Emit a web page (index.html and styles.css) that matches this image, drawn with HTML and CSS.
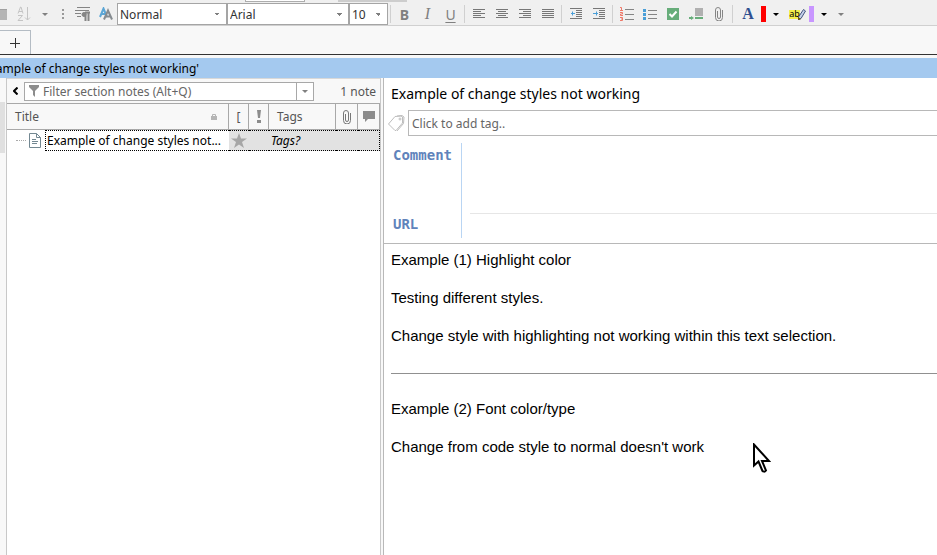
FILE: index.html
```
<!DOCTYPE html>
<html lang="en">
<head>
  <meta charset="UTF-8">
  <title>Notebook</title>
  <link rel="stylesheet" href="styles.css">
</head>
<body>

  <!-- Formatting toolbar -->
  <div class="toolbar">
    <span class="stub stub-box"></span>
    <span class="stub stub-bar"></span>
    <span class="cut-icon"></span>
    <button class="tool sort" aria-label="Sort">
      <svg width="14" height="16" viewBox="0 0 14 16" fill="none" stroke="#c4c4c4">
        <path d="M1 7.500L3.500 1h.5L6 7.500M2 5.500h3.500M1 9.500h4.500L1 14.500h5M10.500 1v13M8 11.500l2.500 2.500 2.500-2.500"/>
      </svg>
    </button>
    <button class="tool more" aria-label="More sorting"><i class="arrow"></i></button>
    <span class="dots"><i></i><i></i><i></i></span>
    <button class="tool" aria-label="Paragraph">
      <svg width="16" height="16" viewBox="0 0 16 16" stroke="#858585">
        <path d="M2 1.500h13M0 4.500h14M0 7.500h6M2 10.500h4" fill="none"/>
        <path d="M10.500 15V6.500M13.500 15V6.500M15 6.500h-5" stroke-width="2" fill="none"/>
        <circle cx="9" cy="8.500" r="2" fill="#858585"/>
      </svg>
    </button>
    <button class="tool" aria-label="Styles">
      <svg width="14" height="14" viewBox="0 0 14 14" fill="none" stroke-width="2">
        <path d="M1 10L4.500 1.500 8 10M2.500 7h4" stroke="#5ba6d6"/>
        <path d="M5 12.500L9 3.500l4 9M6.500 9.500h5" stroke="#858b90"/>
      </svg>
    </button>
    <select class="combo style" aria-label="Style"><option>Normal</option></select>
    <select class="combo font" aria-label="Font"><option>Arial</option></select>
    <select class="combo size" aria-label="Size"><option>10</option></select>
    <span class="sep"></span>
    <button class="tool letter bold">B</button>
    <button class="tool letter italic">I</button>
    <button class="tool letter under">U</button>
    <span class="sep"></span>
    <button class="tool" aria-label="Align left">
      <svg width="12" height="10" viewBox="0 0 12 10" stroke="#777"><path d="M0 .5h12M0 2.500h8M0 4.500h12M0 6.500h8M0 8.500h12"/></svg>
    </button>
    <button class="tool" aria-label="Align centre">
      <svg width="12" height="10" viewBox="0 0 12 10" stroke="#777"><path d="M0 .5h12M2 2.500h8M0 4.500h12M2 6.500h8M0 8.500h12"/></svg>
    </button>
    <button class="tool" aria-label="Align right">
      <svg width="12" height="10" viewBox="0 0 12 10" stroke="#777"><path d="M0 .5h12M4 2.500h8M0 4.500h12M4 6.500h8M0 8.500h12"/></svg>
    </button>
    <button class="tool" aria-label="Justify">
      <svg width="12" height="10" viewBox="0 0 12 10" stroke="#777"><path d="M0 .5h12M0 2.500h12M0 4.500h12M0 6.500h12M0 8.500h12"/></svg>
    </button>
    <span class="sep"></span>
    <button class="tool" aria-label="Outdent">
      <svg width="12" height="12" viewBox="0 0 12 12" stroke="#777"><path d="M0 .5h12M6 2.500h6M6 4.500h6M6 6.500h6M6 8.500h6M0 10.500h12"/><path d="M1 5.500h4M2.500 3.500v4" stroke="#4a9fd8"/></svg>
    </button>
    <button class="tool" aria-label="Indent">
      <svg width="12" height="12" viewBox="0 0 12 12" stroke="#777"><path d="M0 .5h12M6 2.500h6M6 4.500h6M6 6.500h6M6 8.500h6M0 10.500h12"/><path d="M0 5.500h5M3.500 3.500v4" stroke="#4a9fd8"/></svg>
    </button>
    <span class="sep"></span>
    <button class="tool" aria-label="Numbered list">
      <svg width="14" height="14" viewBox="0 0 14 14" fill="none"><path d="M5 2.500h9M5 7.500h9M5 12.500h9" stroke="#858585"/><path d="M0 .5h1.500v3M0 3.500h3M0 5.500h2.500v1.500H.5v1.500h2.500M0 10.500h2.500v3H0M1 12h1.500" stroke="#ee7868"/></svg>
    </button>
    <button class="tool" aria-label="Bullet list">
      <svg width="14" height="12" viewBox="0 0 14 12"><path d="M5 2.500h9M5 6.500h9M5 10.500h9" stroke="#858585"/><path d="M0 1h3v3H0zM0 5h3v3H0zM0 9h3v3H0z" fill="#4a9fd8"/></svg>
    </button>
    <button class="tool" aria-label="Checkbox">
      <svg width="12" height="12" viewBox="0 0 12 12"><path d="M0 0h12v12H0z" fill="#67ad7a"/><path d="M2.500 6L5 8.500l4.500-5" stroke="#fff" stroke-width="2" fill="none"/></svg>
    </button>
    <button class="tool" aria-label="Insert">
      <svg width="14" height="12" viewBox="0 0 14 12"><path d="M6 0h8v8H6z" fill="#b0b0b0"/><path d="M6 9h8v2H6zM0 9h2V8l3 2-3 2v-1H0z" fill="#67ad7a"/></svg>
    </button>
    <button class="tool" aria-label="Attach">
      <svg width="8" height="14" viewBox="0 0 8 14" fill="none" stroke="#858585"><path d="M2.500 4v6a1.500 1.500 0 0 0 3 0V3a2 2 0 0 0-5 0v7.500a3 3 0 0 0 7 0V3"/></svg>
    </button>
    <span class="sep"></span>
    <button class="tool fore" aria-label="Font color">A</button>
    <span class="swatch red"></span>
    <button class="tool drop" aria-label="Pick font color"><i class="arrow black"></i></button>
    <button class="tool" aria-label="Highlight">
      <span class="ab">ab</span>
      <svg class="pen" width="8" height="11" viewBox="0 0 8 11"><path d="M.5 10.500V8L5.500.5l2 1.500L3 9.500z" fill="#c3cfe8" stroke="#43557f"/><path d="M0 8l3 2-2 1H0z" fill="#6b5a10"/></svg>
    </button>
    <span class="swatch purple"></span>
    <button class="tool drop" aria-label="Pick highlight color"><i class="arrow black"></i></button>
    <button class="tool overflow" aria-label="More tools"><i class="arrow"></i></button>
  </div>

  <div class="tabs">
    <button class="new-tab" aria-label="New tab"><svg width="10" height="10" viewBox="0 0 10 10" stroke="#333"><path d="M0 5.500h10M5.500 0v10"/></svg></button>
  </div>

  <div class="caption"><span>Example of change styles not working'</span></div>

  <div class="main">
    <div class="gutter"></div>

    <!-- Notes list -->
    <div class="list">
      <div class="filter">
        <button class="back" aria-label="Collapse"><svg width="5" height="8" viewBox="0 0 5 8" fill="none" stroke="#000" stroke-width="2"><path d="M4.500.5L1 4l3.500 3.500"/></svg></button>
        <div class="filter-box">
          <svg width="10" height="12" viewBox="0 0 10 12"><path d="M0 0h10v2L6 6v6L4 10V6L0 2z" fill="#8c8c8c"/></svg>
          <input type="text" placeholder="Filter section notes (Alt+Q)" aria-label="Filter section notes">
          <button aria-label="Filter history"><i class="arrow"></i></button>
        </div>
        <span class="count">1 note</span>
      </div>

      <table class="notes">
        <colgroup>
          <col class="c-title"><col class="c-small"><col class="c-small"><col><col class="c-icon"><col class="c-icon">
        </colgroup>
        <thead>
          <tr>
            <th><div class="title-head">Title
              <svg width="6" height="7" viewBox="0 0 6 7"><path d="M0 3h6v4H0z" fill="#b5b5b5"/><path d="M1.500 3V1.500h3V3" fill="none" stroke="#b5b5b5"/></svg></div></th>
            <th class="mid bracket">[</th>
            <th class="mid"><svg width="4" height="13" viewBox="0 0 4 13" fill="#8c8c8c"><path d="M0 0h4L3 8H1zM0 10h4v3H0z"/></svg></th>
            <th class="tags-head">Tags</th>
            <th class="mid"><svg width="8" height="14" viewBox="0 0 8 14" fill="none" stroke="#777"><path d="M2.500 4v6a1.500 1.500 0 0 0 3 0V3a2 2 0 0 0-5 0v7.500a3 3 0 0 0 7 0V3"/></svg></th>
            <th class="mid"><svg width="12" height="11" viewBox="0 0 12 11"><path d="M0 0h12v8H5l-3 3V8H0z" fill="#8c8c8c"/></svg></th>
          </tr>
        </thead>
        <tbody>
          <tr>
            <td>
              <div class="note">
                <span class="branch"></span>
                <svg width="12" height="15" viewBox="0 0 12 15" fill="none" stroke="#738892"><path d="M.5.5h7l4 4v10H.5zM7.500.5v4h4M3 6.500h4M3 8.500h6M3 10.500h5"/></svg>
                <span class="note-title">Example of change styles not...</span>
              </div>
            </td>
            <td class="sel mid"><svg width="16" height="15" viewBox="0 0 16 15"><path d="M8 0l2 5.500h6l-5 3.500 2 6-5-3.500L3 15l2-6-5-3.500h6z" fill="#a6a6a6"/></svg></td>
            <td class="sel"></td>
            <td class="sel tags">Tags?</td>
            <td class="sel"></td>
            <td class="sel last"></td>
          </tr>
        </tbody>
      </table>
    </div>

    <!-- Open note -->
    <div class="editor">
      <h1>Example of change styles not working</h1>
      <div class="tag-row">
        <svg width="17" height="17" viewBox="0 0 17 17" fill="none" stroke="#bdbdbd"><path d="M.5 9L7 1.500l6-.5 1.500 1v6L8 15.500H7zM9 1l5-.5 2 1.500-.5 6.500L9 16"/><circle cx="12" cy="4" r="1"/></svg>
        <input type="text" placeholder="Click to add tag.." aria-label="Tags">
      </div>
      <div class="fields">
        <div class="labels">
          <label for="comment">Comment</label>
          <label for="url">URL</label>
        </div>
        <div class="values">
          <textarea id="comment"></textarea>
          <input type="text" id="url">
        </div>
      </div>
      <div class="content">
        <p>Example (1) Highlight color</p>
        <p>Testing different styles.</p>
        <p>Change style with highlighting not working within this text selection.</p>
        <hr>
        <p>Example (2) Font color/type</p>
        <p>Change from code style to normal doesn't work</p>
      </div>
      <svg class="pointer" width="18" height="30" viewBox="0 0 18 30"><path d="M1 1.500v21l4.500-4 4 9.500q2 1.500 3.500-.5l-4-9.500h7z" fill="#fff" stroke="#000" stroke-width="2"/></svg>
    </div>
  </div>

</body>
</html>
```
FILE: styles.css
```
* {
  box-sizing: border-box;
}

body {
  margin: 0;
  min-height: 100vh;
  display: flex;
  flex-direction: column;
  font-family: "Noto Sans", Tahoma, sans-serif;
  font-size: 12px;
  color: #000;
  background: #f8f8f8;
  overflow: hidden;
}

button, input, select, textarea {
  font: inherit;
  color: inherit;
  margin: 0;
  padding: 0;
  border: none;
  background: none;
  outline: none;
}

svg {
  display: block;
  flex: none;
}

/* toolbar */
.toolbar {
  position: relative;
  display: flex;
  align-items: center;
  height: 26px;
  padding-top: 3px;
  background: #f0f0f0;
  border-bottom: 1px solid #d0d0d0;
}

.toolbar > * {
  flex: none;
}

.stub {
  position: absolute;
  top: 0;
  height: 2px;
}

.stub-box {
  left: 245px;
  width: 60px;
  background: #fff;
  border: 1px solid #adadad;
  border-top: none;
}

.stub-bar {
  left: 338px;
  width: 69px;
  background: #cdcdcd;
}

.cut-icon {
  width: 7px;
  height: 11px;
  margin-right: 5px;
  background: #b5b5b5;
  border-top: 1px solid #a0a0a0;
}

.tool {
  display: flex;
  align-items: center;
  justify-content: center;
  width: 23px;
  height: 22px;
}

.more {
  width: 20px;
}

.arrow {
  width: 0;
  border: 3px solid transparent;
  border-top-color: #808080;
  border-bottom: none;
}

.arrow.black {
  border-top-color: #000;
}

.dots {
  display: flex;
  flex-direction: column;
  align-items: center;
  gap: 2px;
  width: 16px;
}

.dots i {
  width: 2px;
  height: 2px;
  background: #999;
}

.combo {
  appearance: none;
  height: 22px;
  padding: 0 2px;
  border: 1px solid #a5a5a5;
  background: conic-gradient(from 315deg at 50% 100%, #808080 90deg, #fff 0) right 6px center / 6px 3px no-repeat, #fff;
  background: conic-gradient(from 315deg at 50% 100%, #808080 90deg, #fff 0) right 6px center / 6px 3px no-repeat, #fff;
  color: #333;
}

.combo.style { width: 110px; }
.combo.font { width: 122px; }
.combo.size { width: 39px; }

.sep {
  width: 1px;
  height: 18px;
  margin: 0 2px;
  background: #d0d0d0;
}

.letter {
  font-size: 14px;
  color: #808080;
}

.bold {
  font-weight: bold;
}

.italic {
  font-family: "Liberation Serif", serif;
  font-style: italic;
  font-size: 16px;
}

.under {
  text-decoration: underline;
  text-underline-offset: 2px;
}

.fore {
  width: 26px;
  font-family: "Liberation Serif", serif;
  font-size: 16px;
  font-weight: bold;
  color: #2f4f8f;
}

.swatch {
  width: 5px;
  height: 16px;
}

.red { background: #f00; }
.purple { background: #c896ff; }

.drop {
  width: 20px;
}

.overflow {
  width: 14px;
}

.ab {
  height: 9px;
  line-height: 8px;
  font-size: 9px;
  background: #f3f04c;
}

.pen {
  margin-left: -2px;
}

/* tabs */
.tabs {
  height: 29px;
  padding-top: 4px;
  border-bottom: 1px solid #333;
}

.new-tab {
  display: flex;
  align-items: center;
  justify-content: center;
  width: 31px;
  height: 24px;
  border: 1px solid #b4bcc4;
  border-left: none;
  border-bottom: none;
}

.caption {
  height: 20px;
  margin-top: 3px;
  background: #a4c9ef;
}

.caption span {
  display: flex;
  justify-content: flex-end;
  width: 199px;
  line-height: 21px;
  white-space: nowrap;
}

/* main area */
.main {
  flex: 1;
  display: flex;
}

.gutter {
  width: 7px;
  border-right: 1px solid #c8c8c8;
  background: linear-gradient(#e0e0e0, #e0e0e0) 0 24px / 5px 51px no-repeat;
}

.list {
  width: 374px;
  background: #fff;
  border-top: 1px solid #d8d8d8;
  border-right: 1px solid #c8c8c8;
}

.filter {
  display: flex;
  align-items: center;
  height: 24px;
  padding-right: 4px;
  background: #f8f8f8;
  color: #555;
}

.back {
  display: flex;
  justify-content: center;
  width: 17px;
}

.filter-box {
  display: flex;
  align-items: center;
  width: 290px;
  height: 19px;
  padding-left: 4px;
  border: 1px solid #a8a8a8;
  background: #fff;
}

.filter-box input {
  flex: 1;
  min-width: 0;
  padding-left: 4px;
}

.filter-box button {
  display: flex;
  align-items: center;
  justify-content: center;
  width: 17px;
  height: 17px;
  border-left: 1px solid #a8a8a8;
}

::placeholder {
  color: #666;
  opacity: 1;
}

.count {
  margin-left: auto;
}

.notes {
  width: 100%;
  table-layout: fixed;
  border-spacing: 0;
}

.c-title { width: 222px; }
.c-small { width: 20px; }
.c-icon { width: 22px; }

.notes th {
  height: 27px;
  padding: 0;
  border: 1px solid #a8a8a8;
  border-left: none;
  background: #f8f8f8;
  color: #555;
  font-weight: normal;
  text-align: left;
}

.title-head {
  display: flex;
  align-items: center;
  justify-content: space-between;
  padding: 0 11px 0 8px;
}

.notes .bracket {
  text-align: center;
}

.mid svg {
  margin: 0 auto;
}

.notes .tags-head {
  padding-left: 8px;
}

.notes td {
  height: 21px;
  padding: 0;
}

.note {
  display: flex;
  align-items: center;
}

.branch {
  width: 10px;
  margin: 0 3px 0 9px;
  border-top: 1px dotted #aaa;
}

.note-title {
  flex: 1;
  height: 21px;
  margin-left: 4px;
  padding-left: 1px;
  line-height: 20px;
  white-space: nowrap;
  overflow: hidden;
  border: 1px dotted #000;
  border-right: none;
}

.sel {
  background: #e2e2e2;
  border: dotted #000;
  border-width: 1px 0;
}

.sel.last {
  border-right-width: 1px;
}

.tags {
  font-style: italic;
}

.notes .tags {
  padding-left: 2px;
}

/* editor */
.editor {
  position: relative;
  flex: 1;
  min-width: 0;
  margin-left: 2px;
  border-left: 1px solid #b8b8b8;
  background: #fff;
}

.editor h1 {
  margin: 0;
  padding-left: 7px;
  font-size: 14px;
  font-weight: normal;
  line-height: 32px;
}

.tag-row {
  display: flex;
  align-items: center;
  padding-left: 4px;
}

.tag-row input {
  flex: 1;
  height: 26px;
  margin-left: 3px;
  padding-left: 3px;
  border: 1px solid #b8b8b8;
  border-right: none;
}

.fields {
  display: flex;
  height: 108px;
  padding: 7px 0 5px;
  border-bottom: 1px solid #b8b8b8;
}

.labels {
  display: flex;
  flex-direction: column;
  justify-content: space-between;
  width: 78px;
  padding: 3px 0 5px 9px;
  border-right: 1px solid #b9d5f3;
  font-family: "DejaVu Sans Mono", monospace;
  font-size: 14px;
  font-weight: bold;
  line-height: 18px;
  color: #5f83bb;
}

.values {
  flex: 1;
  display: flex;
  flex-direction: column;
  padding-left: 8px;
}

.values textarea {
  height: 71px;
  resize: none;
  border-bottom: 1px solid #e6e6e6;
}

.values input {
  height: 24px;
}

.content {
  padding: 6px 0 0 7px;
  font-family: "Liberation Sans", Arial, sans-serif;
  font-size: 15px;
  line-height: 19px;
}

.content p {
  margin: 0 0 19px;
}

.content hr {
  margin: 28px 0 25px;
  border: none;
  border-top: 1px solid #909090;
}

/* mouse pointer over the note */
.pointer {
  position: absolute;
  left: 369px;
  top: 365px;
}
```
